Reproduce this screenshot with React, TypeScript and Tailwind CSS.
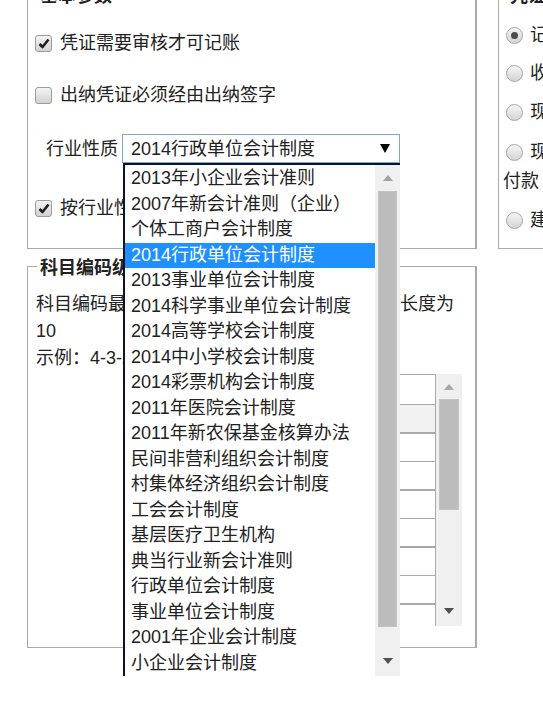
import React from "react";

const items = [
  "2013年小企业会计准则",
  "2007年新会计准则（企业）",
  "个体工商户会计制度",
  "2014行政单位会计制度",
  "2013事业单位会计制度",
  "2014科学事业单位会计制度",
  "2014高等学校会计制度",
  "2014中小学校会计制度",
  "2014彩票机构会计制度",
  "2011年医院会计制度",
  "2011年新农保基金核算办法",
  "民间非营利组织会计制度",
  "村集体经济组织会计制度",
  "工会会计制度",
  "基层医疗卫生机构",
  "典当行业新会计准则",
  "行政单位会计制度",
  "事业单位会计制度",
  "2001年企业会计制度",
  "小企业会计制度",
];

function Check({ checked }: { checked?: boolean }) {
  return (
    <span className="inline-flex h-[17px] w-[17px] shrink-0 items-center justify-center rounded-[3px] border border-[#9c9c9c] bg-linear-to-b from-[#f4f4f4] to-[#d2d2d2]">
      {checked && (
        <svg width="12" height="11" viewBox="0 0 12 11">
          <path d="M1.5 6 L4.5 9 L10.5 1.5" stroke="#1f1f1f" strokeWidth="2.6" fill="none" strokeLinejoin="round" />
        </svg>
      )}
    </span>
  );
}

function Radio({ checked }: { checked?: boolean }) {
  return (
    <span className="ml-[3px] inline-flex h-[17px] w-[17px] shrink-0 items-center justify-center rounded-full border border-[#a6a6a6] bg-linear-to-b from-[#f6f6f6] to-[#d4d4d4]">
      {checked && <span className="h-[7px] w-[7px] rounded-full bg-[#4d4d4d]" />}
    </span>
  );
}

function UpArrow({ color }: { color: string }) {
  return (
    <svg width="10" height="6" viewBox="0 0 10 6">
      <polygon points="0,6 10,6 5,0" fill={color} />
    </svg>
  );
}

function DownArrow({ color }: { color: string }) {
  return (
    <svg width="10" height="6" viewBox="0 0 10 6">
      <polygon points="0,0 10,0 5,6" fill={color} />
    </svg>
  );
}

const rows = [
  { h: "h-[30px]", b: "border-t border-[#a9a9a9]", bg: "" },
  { h: "h-[28px]", b: "border-t border-[#a9a9a9]", bg: "bg-[#f2f2f2]" },
  { h: "h-[29px]", b: "border-t-2 border-[#a9a9a9]", bg: "" },
  { h: "h-[28px]", b: "border-t border-[#a9a9a9]", bg: "" },
  { h: "h-[29px]", b: "border-t-2 border-[#a9a9a9]", bg: "" },
  { h: "h-[28px]", b: "border-t border-[#a9a9a9]", bg: "" },
  { h: "h-[29px]", b: "border-t-2 border-[#a9a9a9]", bg: "" },
  { h: "h-[28px]", b: "border-t border-[#a9a9a9]", bg: "" },
  { h: "h-[23px]", b: "border-t-2 border-[#a9a9a9]", bg: "" },
];

export default function App() {
  return (
    <div className="relative h-[708px] w-[543px] overflow-hidden bg-white font-['Liberation_Sans','Noto_Sans_CJK_SC',sans-serif] text-[18px] text-[#222]">
      <div className="flex items-start pl-[27px]">
        {/* left column */}
        <div className="flex w-[450px] shrink-0 flex-col">
          {/* fieldset 1 */}
          <div className="-mt-[4px] flex h-[253px] flex-col border border-r-2 border-[#a9a9a9]">
            <div className="-mt-[13px] ml-[9px] self-start bg-white px-[3px] font-bold leading-[24px]">基本参数</div>
            <div className="mt-[22px] flex h-[26px] items-center gap-[8px] pl-[7px] leading-[26px]">
              <Check checked />
              <span>凭证需要审核才可记账</span>
            </div>
            <div className="mt-[26px] flex h-[26px] items-center gap-[8px] pl-[7px] leading-[26px]">
              <Check />
              <span>出纳凭证必须经由出纳签字</span>
            </div>
            <div className="mt-[26px] flex items-center pl-[18px]">
              <span className="leading-[26px]">行业性质</span>
              <div className="relative z-10 ml-[4px] flex h-[29px] w-[278px] items-center justify-between border border-[#7fa6d8] pl-[8px] pr-[9px]">
                <span className="whitespace-nowrap leading-[26px]">2014行政单位会计制度</span>
                <svg width="10" height="9" viewBox="0 0 10 9">
                  <polygon points="0,0 10,0 5,9" fill="#000" />
                </svg>
                {/* dropdown list */}
                <div className="absolute left-0 top-[28px] flex h-[513px] w-[277px] border-l-2 border-t-2 border-[#0d1426] bg-white">
                  <div className="flex w-[250px] flex-col pt-[1px]">
                    {items.map((t, i) => (
                      <div
                        key={t}
                        className={
                          "h-[25.5px] whitespace-nowrap pl-[6px] leading-[25.5px] " +
                          (i === 3 ? "bg-[#1e90ff] text-white" : "")
                        }
                      >
                        {t}
                      </div>
                    ))}
                  </div>
                  <div className="flex w-[25px] flex-col items-center bg-[#f0f0f0]">
                    <div className="flex h-[26px] items-center">
                      <UpArrow color="#a3a3a3" />
                    </div>
                    <div className="h-[436px] w-[19px] border border-[#c4c4c4] bg-[#bcbcbc]" />
                    <div className="pt-[31px]">
                      <DownArrow color="#505050" />
                    </div>
                  </div>
                </div>
              </div>
            </div>
            <div className="mt-[32px] flex h-[26px] items-center gap-[8px] pl-[7px] leading-[26px]">
              <Check checked />
              <span className="whitespace-nowrap">按行业性质预置会计科目</span>
            </div>
          </div>

          {/* fieldset 2 */}
          <div className="mt-[17px] flex h-[382px] flex-col border border-r-2 border-[#a9a9a9]">
            <div className="-mt-[11px] ml-[9px] self-start bg-white px-[3px] font-bold leading-[24px]">科目编码级次设置</div>
            <div className="mt-[11px] pl-[8px] leading-[27px]">
              <div className="whitespace-nowrap">
                <span>科目编码最</span>
                <span className="inline-block w-[274px] overflow-hidden align-top">大级数为6级，科目编码的最大</span>
                <span>长度为</span>
              </div>
              <div>10</div>
              <div className="whitespace-nowrap">示例：4-3-2-1</div>
            </div>
            <div className="ml-[160px] mt-[2px] flex h-[252px]">
              <div className="flex w-[248px] flex-col border-r border-[#a9a9a9]">
                {rows.map((r, i) => (
                  <div key={i} className={`${r.h} ${r.b} ${r.bg}`} />
                ))}
              </div>
              <div className="flex w-[26px] flex-col items-center bg-[#f0f0f0]">
                <div className="flex h-[25px] items-center">
                  <UpArrow color="#a8a8a8" />
                </div>
                <div className="h-[111px] w-[20px] border border-[#c4c4c4] bg-[#bcbcbc]" />
                <div className="pt-[98px]">
                  <DownArrow color="#505050" />
                </div>
              </div>
            </div>
          </div>
        </div>

        {/* right column */}
        <div className="ml-[21px] w-[220px] shrink-0">
          <div className="-mt-[4px] flex h-[253px] flex-col border border-[#a9a9a9] pl-[4px]">
            <div className="-mt-[13px] ml-[4px] self-start bg-white px-[3px] font-bold leading-[24px]">凭证类别设置</div>
            <div className="mt-[14px] flex h-[26px] items-center gap-[7px] whitespace-nowrap leading-[26px]">
              <Radio checked />
              <span>记账凭证</span>
            </div>
            <div className="mt-[12px] flex h-[26px] items-center gap-[7px] whitespace-nowrap leading-[26px]">
              <Radio />
              <span>收款凭证 付款凭证 转账凭证</span>
            </div>
            <div className="mt-[13px] flex h-[26px] items-center gap-[7px] whitespace-nowrap leading-[26px]">
              <Radio />
              <span>现金凭证 银行凭证 转账凭证</span>
            </div>
            <div className="mt-[14px] flex h-[26px] items-center gap-[7px] whitespace-nowrap leading-[26px]">
              <Radio />
              <span>现金收款 现金付款 银行收款 银行</span>
            </div>
            <div className="mt-[3px] h-[26px] whitespace-nowrap leading-[26px]">付款 转账凭证</div>
            <div className="mt-[13px] flex h-[26px] items-center gap-[7px] whitespace-nowrap leading-[26px]">
              <Radio />
              <span>建账时自定义凭证类别</span>
            </div>
          </div>
        </div>
      </div>
    </div>
  );
}
